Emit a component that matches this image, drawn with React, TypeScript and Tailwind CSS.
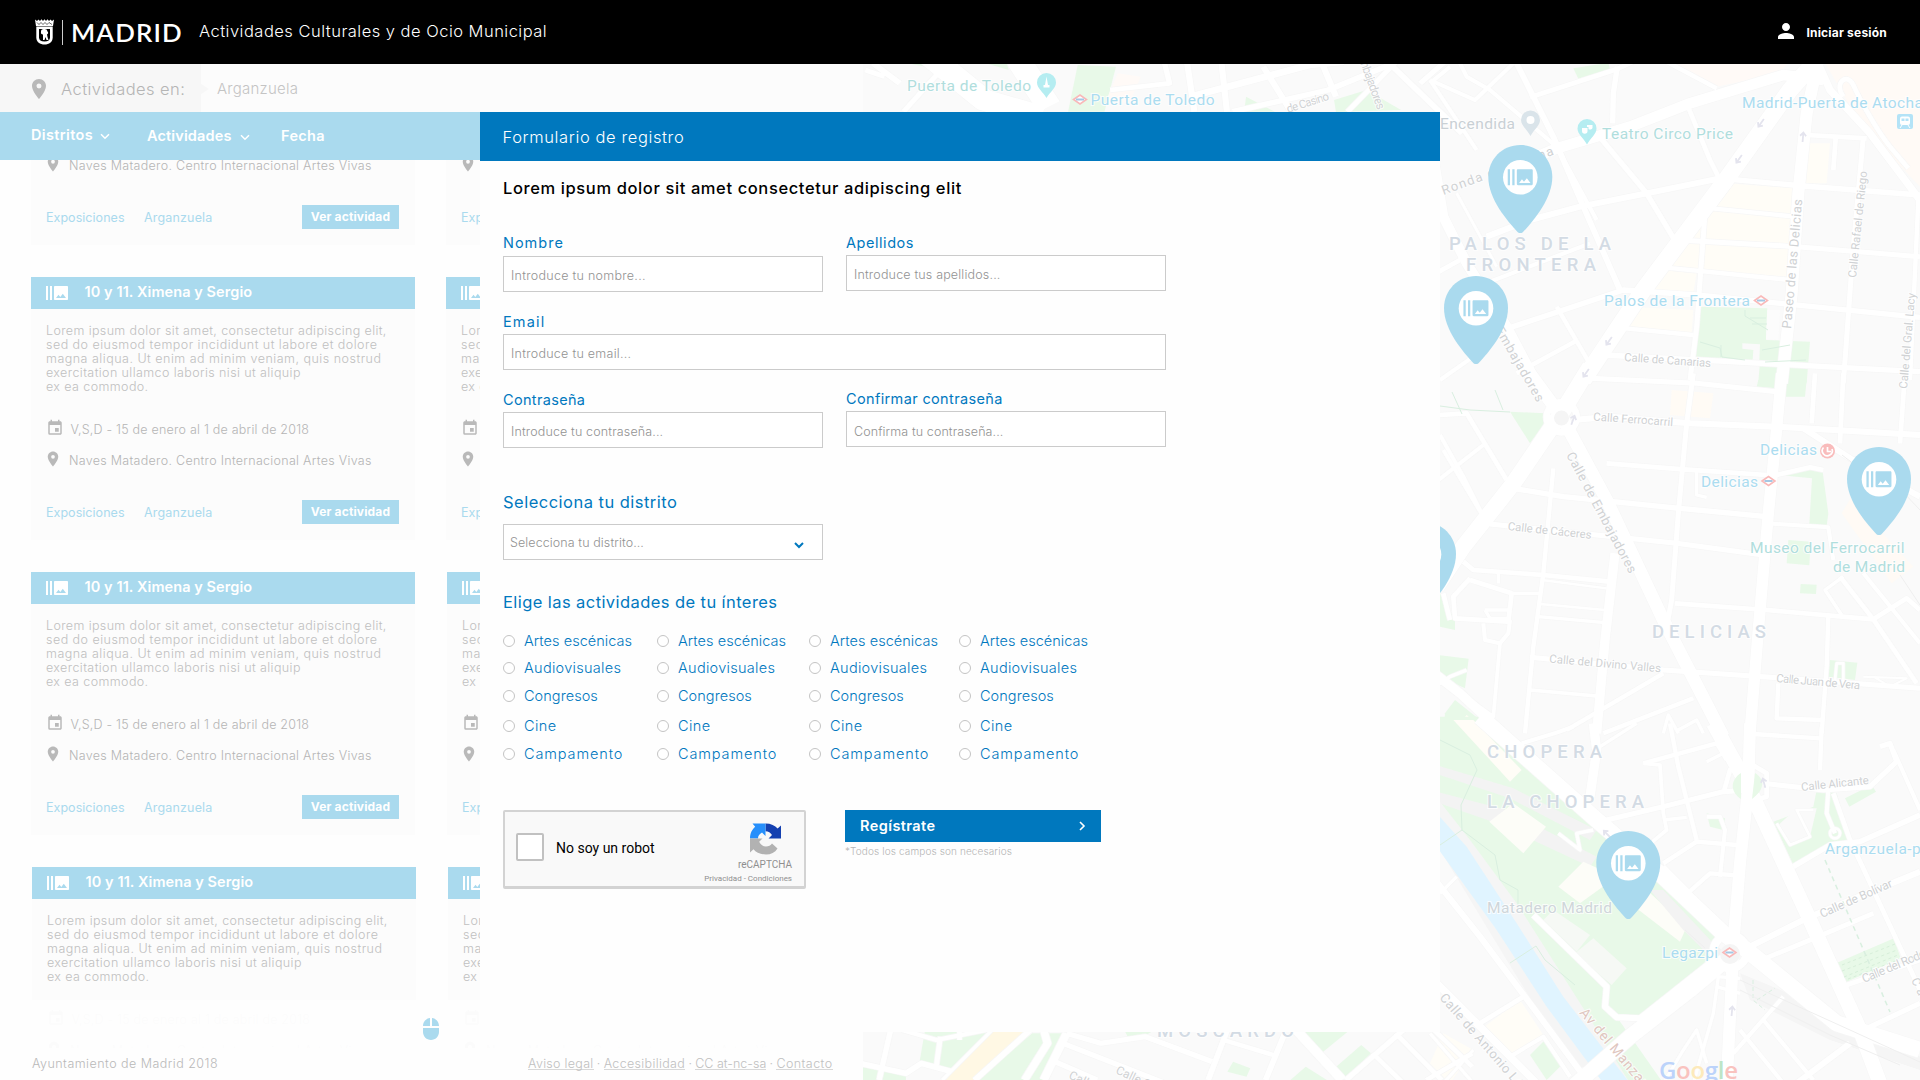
import React from "react";
import {
  MdBurstMode,
  MdEvent,
  MdLocationOn,
  MdMouse,
  MdPerson,
} from "react-icons/md";

/* ---------- Map ---------- */

type Road = [d: string, width: number];

const ROADS_NORTH: Road[] = [
  ["M1160 0L1080 90L880 370L640 690L480 930L460 960", 50],
  ["M1165 0L1130 160L1105 400L1085 700L1055 970", 36],
  ["M180 350L380 265L600 200L780 130L1060 45L1180 60", 32],
  ["M0 230L40 470L110 610L230 800L320 970", 30],
  ["M300 112L560 28L620 0", 14],
  ["M562 20L550 100L548 190", 16],
  ["M255 0L370 230L460 440L570 690", 17],
  ["M85 0L110 50L180 90L380 260L500 480", 12],
  ["M0 70L60 20", 12],
  ["M0 60L135 120L250 10", 12],
  ["M0 60L140 270", 12],
  ["M500 220L650 400L740 550", 16],
  ["M170 530L300 480L450 440L650 400L870 355", 18],
  ["M870 355L1120 378L1470 405", 16],
  ["M770 130L840 300L865 350", 14],
  ["M745 540L1100 560L1470 590", 15],
  ["M845 445L1095 470", 13],
  ["M825 460L800 800L780 960", 15],
  ["M700 622L1080 660", 13],
  ["M180 665L480 550", 12],
  ["M0 650L90 600", 14],
  ["M225 808L400 750L580 690L800 705L1000 725L1470 772", 16],
  ["M585 805L790 825", 13],
  ["M260 940L440 842", 13],
  ["M380 740L490 930", 13],
  ["M80 400L200 620", 9],
  ["M520 885L900 905L1470 935", 16],
  ["M1300 230L1270 560L1240 970", 15],
  ["M1130 225L1310 235", 14],
  ["M1217 235L1210 330", 14],
  ["M1160 0L1200 90L1320 220L1470 420", 22],
  ["M1465 420L1440 960", 13],
  ["M1240 110C1210 70 1250 35 1270 75C1290 120 1340 210 1380 260L1435 325", 14],
  ["M700 0L860 85", 13],
  ["M30 960L130 890", 12],
];

const ROADS_CENTER: Road[] = [
  ["M480 -40L400 90L250 310L100 500L20 620", 48],
  ["M350 112A45 45 0 1 0 440 112A45 45 0 1 0 350 112", 20],
  ["M270 -60L395 110L530 360L700 720L880 1070", 38],
  ["M1055 -20L1035 200L1015 400L985 750L960 1060", 34],
  ["M430 120L540 110L780 130L1040 140L1470 165", 18],
  ["M480 -5L800 10L1040 35", 15],
  ["M790 -20L770 130L745 400L725 660L710 740", 15],
  ["M530 250L760 268L1010 285", 14],
  ["M1040 285L1140 262L1180 270", 14],
  ["M800 275L800 345L830 352", 10],
  ["M250 325L400 350L750 385L1010 410", 16],
  ["M180 432L740 490L1000 525", 15],
  ["M1010 430L1195 442L1210 540", 12],
  ["M100 545L130 570L340 585L540 605", 14],
  ["M370 265L340 580L310 800L285 1060", 13],
  ["M555 520L525 780L500 1060", 28],
  ["M335 600L530 625", 7],
  ["M330 672L525 690", 7],
  ["M325 710L525 728", 10],
  ["M300 832L700 870L1000 890L1470 925", 15],
  ["M300 930L500 948", 11],
  ["M410 1050L700 880", 13],
  ["M520 1060L790 955", 13],
  ["M735 670L1010 690L1330 718L1430 655L1470 690", 14],
  ["M1230 590L1330 718L1460 910", 14],
  ["M1300 580L1470 790", 12],
  ["M1240 590L1185 630L1235 705", 10],
  ["M1195 710L1190 860L1175 1060", 13],
  ["M1045 910L1040 1015L1175 1020", 13],
  ["M1155 -20L1145 130", 14],
  ["M1240 -20L1230 190", 14],
  ["M1425 -20L1410 190", 14],
  ["M1120 145L1260 235L1470 350", 18],
  ["M40 210L160 410", 12],
  ["M0 320L160 195", 12],
  ["M30 105L110 100L230 300", 14],
  ["M30 165L100 290L160 410", 12],
  ["M120 595L70 650L75 715L235 725L245 640L120 600", 14],
  ["M165 690L235 690M165 690L180 715L235 715", 10],
  ["M160 730L165 780L210 790L235 760L240 720", 12],
  ["M205 570L205 610", 10],
  ["M210 790L190 1010L120 960", 11],
  ["M245 640L330 640", 10],
  ["M40 640L60 720", 14],
  ["M0 870L90 940L220 1060", 28],
  ["M0 930L60 890L110 870", 10],
  ["M700 1060L715 1005L745 1060M745 1050L800 1020L820 1060", 10],
  ["M1300 890L1430 895L1380 920L1330 890", 6],
  ["M1215 900L1220 850L1240 850L1240 900", 8],
];

const ROADS_SOUTH: Road[] = [
  ["M150 -40L500 270L700 440L880 610L950 660L1220 880L1470 960", 48],
  ["M850 -20L960 180L1140 570L1290 900L1350 1060", 44],
  ["M960 -20L955 170L930 400L910 640L905 760L890 1060", 36],
  ["M850 665A50 50 0 1 0 950 665A50 50 0 1 0 850 665", 24],
  ["M900 680L780 780L600 920L430 1070", 46],
  ["M310 555L530 770L525 830L560 862L630 865L850 690", 18],
  ["M0 430L150 620L300 820L470 1050", 18],
  ["M0 740L150 890L330 1070", 22],
  ["M955 180L880 185L700 230L530 270", 15],
  ["M1000 160L1180 180L1320 170L1400 95L1380 40L1350 50", 15],
  ["M1210 190L1260 330L1470 780", 14],
  ["M1195 180L1190 250L1215 310", 12],
  ["M1200 310A15 15 0 1 0 1230 310A15 15 0 1 0 1200 310", 8],
  ["M1090 410L1200 345L1290 335L1470 255", 16],
  ["M930 665L1140 560L1470 425", 18],
  ["M970 700L1140 630L1330 550", 14],
  ["M1250 765L1470 690", 14],
  ["M1300 900L1470 820", 15],
  ["M1390 60L1470 240", 12],
  ["M490 -20L500 60L480 200", 28],
  ["M275 40L380 8L430 -10", 12],
  ["M510 50L620 -20", 10],
  ["M720 -20L745 110L800 330", 13],
  ["M640 100L860 40", 13],
  ["M640 100L690 105L700 250L710 300L650 350", 11],
  ["M700 270L770 262", 10],
  ["M700 400L800 335L920 345", 13],
  ["M700 410L780 490", 14],
  ["M750 510L840 430L920 436", 13],
  ["M880 190L900 120L960 100L1010 130L1010 200L955 215", 14],
  ["M860 40L890 90", 12],
  ["M830 95L900 60", 10],
  ["M970 12L1170 25", 13],
  ["M1175 -10L1170 120", 13],
  ["M830 260L870 260L885 300L870 440", 12],
  ["M865 740L850 850L790 1060", 10],
  ["M860 770L930 790M860 740L930 745", 10],
  ["M930 900L1060 1060", 12],
  ["M1060 800L910 970", 12],
  ["M1000 870L1150 1050", 12],
  ["M1260 940L1100 1060", 18],
  ["M150 880L280 800", 14],
  ["M240 980L340 920L420 1040", 12],
  ["M30 490L80 440", 10],
  ["M0 910L130 1060", 10],
  ["M130 960L40 1060", 10],
  ["M700 1060L760 960L800 900L830 1000", 10],
  ["M385 310L450 360L440 310L490 300", 10],
  ["M1040 280L1080 345L1140 320L1100 240L1150 240", 8],
];

const ROADS_TOP: Road[] = [
  ["M60 190L130 250", 16],
  ["M200 160L350 300L500 350", 64],
  ["M440 180L520 320", 64],
  ["M880 180L900 335", 16],
  ["M820 180L835 250L680 270", 14],
  ["M970 180L985 335", 16],
  ["M890 290L1200 195L1290 185", 20],
  ["M1080 200L1150 330", 16],
  ["M1000 335L1250 270L1420 190", 16],
  ["M1300 335L1440 170", 14],
  ["M1400 180L1600 400", 16],
  ["M1490 250L1560 180", 14],
  ["M140 335L230 220", 14],
  ["M40 210L90 230", 14],
  ["M1230 180L1270 290", 16],
];

const ROADS_BOTTOM: Road[] = [
  ["M0 190L120 220L160 190L240 215", 16],
  ["M80 90L50 240", 14],
  ["M110 90L200 120L330 90", 13],
  ["M210 110L200 195", 13],
  ["M260 90L260 120", 12],
  ["M345 90L215 240", 10],
  ["M445 90L300 240", 16],
  ["M480 90L490 130L430 240", 20],
  ["M540 100L480 240", 22],
  ["M530 130L820 260", 15],
  ["M540 100L630 130L745 110L920 185", 15],
  ["M510 185L620 240", 15],
  ["M960 90L910 240", 15],
  ["M950 120L1080 165", 13],
  ["M1110 100L1060 240", 15],
  ["M1140 90L1260 240", 26],
  ["M1420 90L1270 240", 15],
  ["M1340 160L1420 250", 13],
  ["M1500 90L1600 200", 13],
  ["M1400 100L1520 240", 13],
  ["M1600 160L1480 240", 13],
];

const AREAS: { at: string; fill: string; d: string }[] = [
  // north
  { at: "n", fill: "#e8f9e8", d: "M430 25L445 56L540 28L535 8Z" },
  { at: "n", fill: "#e8f9e8", d: "M775 528L815 488L812 532Z" },
  { at: "n", fill: "#fffdf7", d: "M890 370L1100 385L1080 650L700 620L830 450Z" },
  { at: "n", fill: "#fffdf7", d: "M690 630L800 640L790 700L640 690Z" },
  { at: "n", fill: "#fffdf7", d: "M590 740L790 750L785 820L540 810Z" },
  { at: "n", fill: "#fffdf7", d: "M1110 250L1200 250L1190 370L1100 370Z" },
  { at: "n", fill: "#fffaf7", d: "M700 0L1080 0L1050 40L860 80Z" },
  { at: "n", fill: "#fffaf6", d: "M1180 0L1470 0L1470 380L1290 190Z" },
  { at: "n", fill: "#e8f9e8", d: "M812 740L1012 745L1008 840L1140 845L1130 970L985 965L990 905L798 890Z" },
  { at: "n", fill: "#fafafa", d: "M937 850L990 853L988 900L968 900L970 870L937 866Z" },
  { at: "n", fill: "#fcfcfc", d: "M1012 750L1050 750L1045 840L1008 838Z" },
  // center
  { at: "c", fill: "#e8f9e8", d: "M240 95L345 100L345 130L300 190Z" },
  { at: "c", fill: "#e8f9e8", d: "M985 0L1130 0L1125 50L1060 50L1040 25L980 20Z" },
  { at: "c", fill: "#fffbf5", d: "M725 30L850 40L840 115L720 105Z" },
  { at: "c", fill: "#e8f9e8", d: "M1045 275L1140 262L1178 275L1195 400L1190 438L1138 432L1146 295L1045 285Z" },
  { at: "c", fill: "#e8f9e8", d: "M1075 480L1142 485L1138 556L1070 550Z" },
  { at: "c", fill: "#e8f9e8", d: "M1112 612L1160 614L1158 642L1110 640Z" },
  { at: "c", fill: "#fffaf5", d: "M1262 355L1235 400L1385 610L1450 560Z" },
  { at: "c", fill: "#e8f9e8", d: "M30 640L75 720L75 750L30 740Z" },
  { at: "c", fill: "#e8f9e8", d: "M30 826L116 836L105 925L30 890Z" },
  { at: "c", fill: "#e8f9e8", d: "M75 960L200 1060L40 1060L45 1000Z" },
  { at: "c", fill: "#fffdf5", d: "M110 1005L170 1060L60 1060Z" },
  { at: "c", fill: "#e8f9e8", d: "M1200 840L1282 848L1275 900L1195 890Z" },
  // south
  { at: "s", fill: "#e8f9e8", d: "M0 -40L160 -40L500 270L860 620L850 700L630 860L560 860L700 1060L560 1060L0 240Z" },
  { at: "s", fill: "#fffdf7", d: "M70 -30L130 -30L275 120L240 155Z" },
  { at: "s", fill: "#f3f3f3", d: "M0 100L250 175L500 300L480 330L240 205L0 125Z" },
  { at: "s", fill: "#f3f3f3", d: "M0 180L230 240L500 380L480 410L200 280L0 210Z" },
  { at: "s", fill: "#fdfdf8", d: "M250 220L348 290L280 370L178 275Z" },
  { at: "s", fill: "#fdfdf8", d: "M460 395L560 440L450 520L385 470Z" },
  { at: "s", fill: "#fdfdf8", d: "M640 470L770 590L750 635L600 520Z" },
  { at: "s", fill: "#f6f9f5", d: "M370 540L480 615L440 665L340 570Z" },
  { at: "s", fill: "#f6f9f5", d: "M490 625L590 715L545 765L435 670Z" },
  { at: "s", fill: "#f3f3f3", d: "M660 480L700 480L850 640L900 680L880 700L830 670L760 600Z" },
  { at: "s", fill: "#f5f5f5", d: "M30 215L120 330L260 520L400 740L520 930L600 1060L420 1000L230 690L30 360Z" },
  { at: "s", fill: "#e0f4ff", d: "M20 250L110 350L260 580L400 800L600 1060L520 1060L350 830L200 600L20 350Z" },
  { at: "s", fill: "#fffdf7", d: "M150 900L270 810L340 915L240 975Z" },
  { at: "s", fill: "#fffdf7", d: "M40 910L130 960L60 1060L0 1000Z" },
  { at: "s", fill: "#e8f9e8", d: "M345 930L400 1000L350 1050L300 975Z" },
  { at: "s", fill: "#e8f9e8", d: "M830 250L885 265L880 300L840 290Z" },
  { at: "s", fill: "#e8f9e8", d: "M1030 275L1150 230L1160 180L1220 190L1260 330L1090 405Z" },
  { at: "s", fill: "#fafafa", d: "M1045 285L1100 235L1160 235L1140 320L1080 350Z" },
  { at: "s", fill: "#e8f9e8", d: "M1245 205L1325 165L1338 185L1258 230Z" },
  { at: "s", fill: "#e8f9e8", d: "M1218 700L1392 625L1412 685L1240 760Z" },
  { at: "s", fill: "#f5f5f5", d: "M930 730L1100 800L1300 900L1470 980L1470 1020L1200 930L960 810Z" },
  // strip above the dialog
  { at: "t", fill: "#e8f9e8", d: "M150 190L270 190L280 210L220 205Z" },
  { at: "t", fill: "#e8f9e8", d: "M355 190L410 190L415 210Z" },
  { at: "t", fill: "#e8f9e8", d: "M595 195L695 200L665 335L570 335Z" },
  { at: "t", fill: "#e8f9e8", d: "M1035 290L1110 335L1030 335Z" },
  { at: "t", fill: "#e8f9e8", d: "M1265 300L1350 270L1440 330L1270 336Z" },
  { at: "t", fill: "#fffaf7", d: "M700 220L760 230L730 310L670 300Z" },
  // strip below the dialog
  { at: "b", fill: "#e8f9e8", d: "M170 90L340 90L230 215L155 190Z" },
  { at: "b", fill: "#e8f9e8", d: "M0 200L120 225L120 240L0 240Z" },
  { at: "b", fill: "#fff8e4", d: "M350 90L435 90L295 240L222 240Z" },
  { at: "b", fill: "#e8f9e8", d: "M450 100L540 100L480 240L300 240Z" },
  { at: "b", fill: "#e8f9e8", d: "M690 90L770 90L740 110L700 110Z" },
  { at: "b", fill: "#e8f9e8", d: "M1160 90L1280 90L1200 165Z" },
  { at: "b", fill: "#e8f9e8", d: "M1310 135L1335 160L1270 235L1240 205Z" },
  { at: "b", fill: "#e8f9e8", d: "M1165 200L1220 240L1125 240Z" },
  { at: "b", fill: "#e8f9e8", d: "M975 185L1020 205L1010 230L960 215Z" },
];

const TILES: { id: string; transform: string; roads: Road[] }[] = [
  { id: "t", transform: "translate(850 0) scale(.38265 .33333)", roads: ROADS_TOP },
  { id: "b", transform: "translate(860 1000) scale(.38265 .33333)", roads: ROADS_BOTTOM },
  { id: "n", transform: "translate(1430 60) scale(.33333)", roads: ROADS_NORTH },
  { id: "c", transform: "translate(1430 380) scale(.33333)", roads: ROADS_CENTER },
  { id: "s", transform: "translate(1430 730) scale(.33333)", roads: ROADS_SOUTH },
];

interface LabelProps {
  x: number;
  y: number;
  w: number;
  size: number;
  fill?: string;
  rotate?: number;
  weight?: number;
  children: string;
}

function Label({ x, y, w, size, fill = "#d0d2d4", rotate = 0, weight = 400, children }: LabelProps) {
  return (
    <text
      transform={`translate(${x} ${y}) rotate(${rotate})`}
      fontSize={size}
      fontWeight={weight}
      fill={fill}
      stroke="#fff"
      strokeOpacity={0.8}
      strokeWidth={2}
      paintOrder="stroke"
      textLength={w}
    >
      {children}
    </text>
  );
}

function Metro({ x, y }: { x: number; y: number }) {
  return (
    <g transform={`translate(${x} ${y})`}>
      <path d="M-6.5 0L0-4.5L6.5 0L0 4.5Z" fill="#fff" stroke="#f9b9b9" strokeWidth="1.6" />
      <rect x="-4" y="-1" width="8" height="2" fill="#a5c8e4" />
    </g>
  );
}

function Pin({ x, y }: { x: number; y: number }) {
  return (
    <g transform={`translate(${x} ${y})`}>
      <path
        d="M32 0C14 0 0 14.3 0 32C0 54 19 76 29.5 87.2Q32 89 34.5 87.2C45 76 64 54 64 32C64 14.3 50 0 32 0Z"
        fill="#aadaee"
      />
      <circle cx="32" cy="32.3" r="17.3" fill="#fff" />
      <MdBurstMode x={18.3} y={18.6} width={27.3} height={27.3} size={27.3} color="#aadaee" />
    </g>
  );
}

function Arrow({ x, y, r }: { x: number; y: number; r: number }) {
  return (
    <path
      d="M0 5V-4M-3 -1L0 -4.5L3 -1"
      transform={`translate(${x} ${y}) rotate(${r})`}
      fill="none"
      stroke="#e4e4ee"
      strokeWidth="1.8"
    />
  );
}

function CityMap() {
  const teal = "#b0dedd";
  const sky = "#abdcf0";
  const area = "#d3dbe4";
  return (
    <svg className="absolute inset-0 h-[1080px] w-[1920px]" viewBox="0 0 1920 1080" fontFamily="Roboto, sans-serif">
      <rect width="1920" height="1080" fill="#fafafa" />
      {TILES.map((t) => (
        <g key={t.id} transform={t.transform}>
          {AREAS.filter((a) => a.at === t.id).map((a) => (
            <path key={a.d} d={a.d} fill={a.fill} />
          ))}
        </g>
      ))}
      {["#f7f7f7", "#ffffff"].map((stroke, pass) =>
        TILES.map((t) => (
          <g key={t.id + stroke} transform={t.transform} fill="none" stroke={stroke} strokeLinejoin="round">
            {t.roads.map(([d, w]) => (
              <path key={d} d={d} strokeWidth={pass === 0 ? w + 4 : w} />
            ))}
          </g>
        ))
      )}
      <circle cx="1561.5" cy="418" r="7.5" fill="#f5f5f5" />
      <path d="M1741 773C1730 780 1730 792 1741 799Z" fill="#e8f9e8" />
      <path d="M1755 773C1766 780 1764 790 1752 799Z" fill="#e8f9e8" />
      <circle cx="1730" cy="954" r="10" fill="#f5f5f5" />
      <g fill="none" stroke="#d9efe0" strokeWidth="1">
        <path d="M1745 310V316L1768 330M1750 318H1766M1752 324H1767M1700 342L1720 348L1722 357L1745 360M1721 345V357M1762 350L1790 345M1765 362L1806 360" />
        <path d="M1440 406L1470 410L1510 412M1452 392L1462 414M1495 390L1503 410" />
        <path d="M1440 740L1470 755L1477 770L1461 805L1462 830L1495 855L1500 880L1518 890V905" />
        <path d="M1440 845L1462 830M1510 963L1536 946M1536 946L1545 960L1575 985" />
        <path d="M1825 860L1890 1012" strokeWidth="1.5" strokeDasharray="5 4" />
        <path d="M1753 980V1000L1765 1010M1757 1000L1775 988" strokeDasharray="4 3" />
      </g>
      <g fill="none" stroke="#d7efda" strokeWidth="1" strokeDasharray="3 3">
        <path d="M1842 965L1895 944M1842 971L1897 950M1844 977L1898 955M1848 979L1898 960" />
      </g>
      <g fill="none" stroke="#efefef" strokeWidth="1">
        <path d="M1868 455L1920 510M1842 455L1868 475M1900 575L1920 605M1685 930L1705 948M1740 980L1850 1030L1920 1062M1740 990L1830 1035L1900 1065" />
      </g>

      <Arrow x={1761} y={123} r={215} />
      <Arrow x={1739} y={159} r={215} />
      <Arrow x={1803} y={137} r={5} />
      <Arrow x={1609} y={341} r={215} />
      <Arrow x={1586} y={373} r={215} />
      <Arrow x={1573} y={420} r={20} />
      <Arrow x={1764} y={783} r={-15} />
      <Arrow x={1607} y={834} r={-45} />
      <Arrow x={1732} y={1011} r={5} />

      <Label x={907} y={91} w={124} size={15.5} fill={teal}>Puerta de Toledo</Label>
      <Label x={1090.5} y={105} w={124} size={15.5} fill={sky}>Puerta de Toledo</Label>
      <Label x={1742} y={107.5} w={181} size={15.5} fill={sky}>Madrid-Puerta de Atocha</Label>
      <Label x={1440} y={128.5} w={75} size={15.5} fill="#c9d0d5">Encendida</Label>
      <Label x={1602} y={138.5} w={131} size={15.5} fill={teal}>Teatro Circo Price</Label>
      <Label x={1604} y={306} w={146} size={15.5} fill={sky}>Palos de la Frontera</Label>
      <Label x={1760} y={455} w={57} size={15.5} fill={sky}>Delicias</Label>
      <Label x={1701} y={486.5} w={57} size={15.5} fill={sky}>Delicias</Label>
      <Label x={1750} y={553} w={154.5} size={15.5} fill={teal}>Museo del Ferrocarril</Label>
      <Label x={1833} y={572} w={72} size={15.5} fill={teal}>de Madrid</Label>
      <Label x={1487} y={912.5} w={125} size={15.5} fill="#cfd6da">Matadero Madrid</Label>
      <Label x={1662} y={958} w={56} size={15.5} fill={sky}>Legazpi</Label>
      <Label x={1825} y={854} w={100} size={15.5} fill={sky}>Arganzuela-pl</Label>

      <Label x={1449} y={250} w={162} size={18.5} fill={area} weight={500}>PALOS DE LA</Label>
      <Label x={1466} y={271} w={130} size={18.5} fill={area} weight={500}>FRONTERA</Label>
      <Label x={1652} y={638} w={114} size={18.5} fill={area} weight={500}>DELICIAS</Label>
      <Label x={1487} y={757.5} w={115} size={18.5} fill={area} weight={500}>CHOPERA</Label>
      <Label x={1487} y={807.5} w={157} size={18.5} fill={area} weight={500}>LA CHOPERA</Label>
      <Label x={1157} y={1036.5} w={137} size={18.5} fill={area} weight={500}>MOSCARDÓ</Label>

      <Label x={1443.5} y={195} w={118} size={13} rotate={-20}>Ronda de Atocha</Label>
      <Label x={1495} y={330} w={84} size={13} rotate={60}>Embajadores</Label>
      <Label x={1566} y={455} w={135} size={13} rotate={62}>Calle de Embajadores</Label>
      <Label x={1791} y={329} w={130} size={13} rotate={-85}>Paseo de las Delicias</Label>
      <Label x={1856} y={278} w={107} size={11.5} rotate={-84}>Calle Rafael de Riego</Label>
      <Label x={1907} y={389} w={96} size={11.5} rotate={-85}>Calle del Gral. Lacy</Label>
      <Label x={1624} y={361} w={87} size={11.5} rotate={4}>Calle de Canarias</Label>
      <Label x={1593} y={420.5} w={80} size={11.5} rotate={4}>Calle Ferrocarril</Label>
      <Label x={1507.5} y={530} w={84} size={11.5} rotate={6}>Calle de Cáceres</Label>
      <Label x={1549} y={662.5} w={112} size={11.5} rotate={5}>Calle del Divino Valles</Label>
      <Label x={1776} y={682} w={84} size={11.5} rotate={5}>Calle Juan de Vera</Label>
      <Label x={1801.5} y={791} w={68} size={11.5} rotate={-6}>Calle Alicante</Label>
      <Label x={1822} y={918} w={78} size={12} rotate={-24}>Calle de Bolívar</Label>
      <Label x={1864} y={983} w={74} size={12} rotate={-23}>Calle del Rodeo</Label>
      <Label x={1911} y={980} w={60} size={12} rotate={65}>Camino</Label>
      <Label x={1439} y={998} w={142} size={13} rotate={49}>Calle de Antonio López</Label>
      <Label x={1579} y={1013} w={130} size={14} rotate={50} fill="#e0c6bf">Av del Manzanares</Label>
      <Label x={1068} y={1078} w={75} size={12} rotate={25}>Calle de Elvira</Label>
      <Label x={1115} y={1073} w={90} size={12} rotate={25}>Calle Gral. Marvá</Label>
      <Label x={1357} y={54} w={60} size={12} rotate={70}>Embajadores</Label>
      <Label x={1288} y={113} w={44} size={11.5} rotate={-18}>de Casino</Label>

      <Metro x={1080} y={99.5} />
      <Metro x={1761} y={300.5} />
      <Metro x={1768.5} y={481} />
      <Metro x={1729.5} y={952.5} />
      <circle cx="1827.5" cy="451" r="7.5" fill="#f9bcbc" />
      <path d="M1823.5 447.500A5 5 0 1 0 1832 449M1827.500 447V451.500H1831" fill="none" stroke="#fff" strokeWidth="1.7" />

      <g transform="translate(1037 73)">
        <path d="M9.500 0A9.500 9.500 0 0 1 19 9.500C19 15 13 19 9.500 25C6 19 0 15 0 9.500A9.500 9.500 0 0 1 9.500 0Z" fill="#b5edf1" />
        <path d="M9.500 3.500L11 12H12.500V14.500H6.500V12H8Z" fill="#fff" />
      </g>
      <g transform="translate(1577.500 119)">
        <path d="M9.500 0A9.500 9.500 0 0 1 19 9.500C19 15 13 19 9.500 25.500C6 19 0 15 0 9.500A9.500 9.500 0 0 1 9.500 0Z" fill="#b5edf1" />
        <path d="M4.500 9H10V12A2.700 2.700 0 0 1 4.500 12ZM9.500 6H15V9A2.700 2.700 0 0 1 11 10V8H9.500Z" fill="#fff" />
      </g>
      <g transform="translate(1521 110.500)">
        <path d="M9.500 0A9.500 9.500 0 0 1 19 9.500C19 15 13 19 9.500 25.500C6 19 0 15 0 9.500A9.500 9.500 0 0 1 9.500 0Z" fill="#dae4ea" />
        <circle cx="9.500" cy="9.500" r="4" fill="#fff" />
      </g>
      <rect x="1897" y="114" width="16" height="15" rx="2" fill="#b4e3f7" />
      <rect x="1900" y="116.500" width="10" height="8.500" rx="2" fill="#fff" />
      <path d="M1901.500 118.500H1904.500V121H1901.500ZM1905.500 118.500H1908.500V121H1905.500Z" fill="#b4e3f7" />
      <path d="M1902 125L1900 128M1908 125L1910 128" stroke="#fff" />

      <text x="1659" y="1079" fontFamily="Open Sans, sans-serif" fontSize="24" fontWeight="600" textLength="79">
        <tspan fill="#bcd3fa">G</tspan>
        <tspan fill="#f9c3bf">o</tspan>
        <tspan fill="#fdeabb">o</tspan>
        <tspan fill="#bcd3fa">g</tspan>
        <tspan fill="#bde5c7">l</tspan>
        <tspan fill="#f9c3bf">e</tspan>
      </text>

      <Pin x={1488.300} y={145} />
      <Pin x={1444} y={276} />
      <Pin x={1392} y={522} />
      <Pin x={1847} y={447} />
      <Pin x={1596.300} y={831} />
    </svg>
  );
}

/* ---------- Top bars ---------- */

function Shield() {
  return (
    <svg width="19" height="26" viewBox="0 0 19 26" className="shrink-0">
      <path
        d="M0 .5L2 2L3.500 .5L5 2L6.500 .3L8 2L9.500 .2L11 2L12.500 .3L14 2L15.500 .5L17 2L19 .5L18 7H1Z"
        fill="#fff"
      />
      <path d="M2 3.500L4 5.500L6 3.500L8 5.500L10 3.500L12 5.500L14 3.500L17 5.500" stroke="#000" strokeWidth=".6" fill="none" />
      <path d="M1.300 7.600H17.700V18.500C17.700 23 14 25.500 9.500 25.500C5 25.500 1.300 23 1.300 18.500Z" fill="#fff" />
      <path d="M4 10H15V18.500C15 21 13 22.500 9.500 22.500C6 22.500 4 21 4 18.500Z" fill="#000" />
      <path d="M6 13A3 2.500 0 0 1 12.500 12.500A2 2 0 0 1 12 15.500L12.500 18L13.500 21H11.500L10.500 18L9.500 21H8V15.500C6.500 15.500 5.500 14.500 6 13Z" fill="#fff" />
    </svg>
  );
}

function Header() {
  return (
    <header className="relative flex h-16 w-full bg-black text-white">
      <div className="ml-[35px] flex h-16 items-center">
        <Shield />
        <span className="ml-[8px] h-[25px] w-px bg-white/80" />
        <span className="ml-[8px] font-['Lato'] text-[25.800px] leading-[32px] font-semibold tracking-[1.150px]">MADRID</span>
      </div>
      <h1 className="absolute top-[21px] left-[199px] text-[16.500px] leading-5 font-light tracking-[0.480px] whitespace-nowrap">
        Actividades Culturales y de Ocio Municipal
      </h1>
      <div className="mr-[33px] ml-auto flex items-start">
        <MdPerson size={24} className="mt-[19px]" />
        <span className="mt-[23px] ml-[8px] text-[12px] leading-5 font-bold tracking-[0.200px]">Iniciar sesión</span>
      </div>
    </header>
  );
}

function Chevron({ className }: { className?: string }) {
  return (
    <svg width="10" height="7" viewBox="0 0 10 7" className={className}>
      <path d="M1 1.200L5 5.300L9 1.200" fill="none" stroke="currentColor" strokeWidth="1.500" />
    </svg>
  );
}

function LocationBar() {
  return (
    <div className="flex h-12 w-[863px] bg-[#fcfcfc] text-[#b5b5b5]">
      <div className="flex h-12 w-[201px] bg-[#f7f7f7]">
        <MdLocationOn size={24} className="mt-[13px] ml-[27px] text-[#b9b9b9]" />
        <span className="mt-[15px] ml-[10px] text-[16.500px] leading-5 font-light tracking-[0.450px] whitespace-nowrap">
          Actividades en:
        </span>
      </div>
      <svg width="8" height="10" viewBox="0 0 8 10" className="mt-[20px]">
        <path d="M0 0L8 5L0 10Z" fill="#f7f7f7" />
      </svg>
      <span className="mt-[15px] ml-[8px] text-[15px] leading-5 font-light tracking-[0.250px] text-[#c4c4c4]">Arganzuela</span>
    </div>
  );
}

function NavBar() {
  return (
    <nav className="flex h-12 w-[863px] bg-[#aadaee] text-[14.500px] leading-5 font-semibold text-white">
      <span className="mt-[13px] ml-[31px] tracking-[0.350px]">Distritos</span>
      <Chevron className="mt-[21px] ml-[7px]" />
      <span className="mt-[14px] ml-[37px] tracking-[0.150px]">Actividades</span>
      <Chevron className="mt-[22px] ml-[8px]" />
      <span className="mt-[14px] ml-[31.500px] tracking-[0.300px]">Fecha</span>
    </nav>
  );
}

/* ---------- Activity cards ---------- */

function ActivityCard() {
  return (
    <article className="h-[263px] w-[384px] shrink-0 bg-[#fcfcfc] text-[#b9b9b9]">
      <header className="flex h-8 items-start bg-[#aadaee] text-white">
        <MdBurstMode size={24} className="mt-[4px] ml-[14px]" />
        <h2 className="mt-[5px] ml-[15.500px] text-[14.500px] leading-5 font-semibold tracking-[0.080px] whitespace-nowrap">
          10 y 11. Ximena y Sergio
        </h2>
      </header>
      <p className="mt-[15px] ml-[15px] text-[12.500px] leading-[14px] font-light tracking-[0.400px] whitespace-nowrap text-[#c0c0c0]">
        <span className="tracking-[0.370px]">Lorem ipsum dolor sit amet, consectetur adipiscing elit,</span>
        <br />
        <span className="tracking-[0.470px]">sed do eiusmod tempor incididunt ut labore et dolore</span>
        <br />
        <span className="tracking-[0.490px]">magna aliqua. Ut enim ad minim veniam, quis nostrud</span>
        <br />
        exercitation ullamco laboris nisi ut aliquip
        <br />
        ex ea commodo.
      </p>
      <div className="mt-[26px] ml-[14.500px] flex h-[20px] text-[12.500px] leading-5 whitespace-nowrap">
        <MdEvent size={18} className="-mt-px" />
        <span className="ml-[7px] font-light tracking-[0.220px] text-[#b5b5b5]">V,S,D - 15 de enero al 1 de abril de 2018</span>
      </div>
      <div className="mt-[11px] ml-[13px] flex h-[20px] text-[12.500px] leading-5 whitespace-nowrap">
        <MdLocationOn size={18} className="-mt-px" />
        <span className="ml-[7px] font-light tracking-[0.290px] text-[#b5b5b5]">Naves Matadero. Centro Internacional Artes Vivas</span>
      </div>
      <div className="mt-[29px] mr-[16px] ml-[15px] flex text-[12.500px] leading-5 text-[#aadaee]">
        <span className="mt-[3px] tracking-[0.040px]">Exposiciones</span>
        <span className="mt-[3px] ml-[19.500px] tracking-[0.160px]">Arganzuela</span>
        <span className="ml-auto flex h-[24px] w-[97px] items-center justify-center bg-[#aadaee] pb-px text-[12px] font-bold tracking-[0.150px] text-white">
          Ver actividad
        </span>
      </div>
    </article>
  );
}

function ActivityList() {
  return (
    <section className="relative h-[888px] w-[863px] overflow-hidden bg-[#fefefe]">
      <div className="-mt-[178px] flex flex-col gap-8">
        {[0, 1, 2, 3].map((row) => (
          <div key={row} className={`flex ${row === 3 ? "ml-8 gap-8" : row === 2 ? "ml-[31px] gap-8" : "ml-[31px] gap-[31px]"}`}>
            <ActivityCard />
            <ActivityCard />
          </div>
        ))}
      </div>
      <div className="absolute bottom-0 left-0 h-[48px] w-full bg-[#fefefe]/96" />
      <MdMouse size={24} className="absolute bottom-[7px] left-[419px] text-[#aadaee]" />
    </section>
  );
}

function Footer() {
  return (
    <footer className="flex h-8 w-[863px] bg-[#fefefe] text-[12.500px] leading-5 font-light whitespace-nowrap text-[#b9b9b9]">
      <span className="mt-[6px] ml-[32px] tracking-[0.470px]">Ayuntamiento de Madrid 2018</span>
      <div className="mt-[6px] ml-[310px] flex h-[16px] leading-[19px] text-[#c0c0c0]">
        <span className="border-b border-[#d8d8d8] tracking-[0.290px]">Aviso legal</span>
        <span className="mx-[3.300px]">·</span>
        <span className="border-b border-[#d8d8d8] tracking-[0.330px]">Accesibilidad</span>
        <span className="mx-[3.300px]">·</span>
        <span className="border-b border-[#d8d8d8] tracking-[0px]">CC at-nc-sa</span>
        <span className="mx-[3.300px]">·</span>
        <span className="border-b border-[#d8d8d8] tracking-[0.450px]">Contacto</span>
      </div>
    </footer>
  );
}

/* ---------- Registration form ---------- */

interface FieldProps {
  label: string;
  placeholder: string;
  labelClass: string;
  placeholderClass: string;
  boxClass: string;
  className?: string;
}

function Field({ label, placeholder, labelClass, placeholderClass, boxClass, className = "" }: FieldProps) {
  return (
    <div className={className}>
      <div className={`text-[14.500px] leading-5 font-normal text-[#0078be] ${labelClass}`}>{label}</div>
      <div className={`flex h-[36px] items-start border border-[#cbcbcb] bg-white pl-[7px] ${boxClass}`}>
        <span className={`text-[12.500px] leading-5 font-light text-[#929292] ${placeholderClass}`}>{placeholder}</span>
      </div>
    </div>
  );
}

const ACTIVITIES = [
  { name: "Artes escénicas", row: "mt-[17px]", tracking: "tracking-[0.050px]" },
  { name: "Audiovisuales", row: "mt-[7px]", tracking: "tracking-[0.290px]" },
  { name: "Congresos", row: "mt-[8px]", tracking: "tracking-[0.060px]" },
  { name: "Cine", row: "mt-[10px]", tracking: "tracking-[0.400px]" },
  { name: "Campamento", row: "mt-[8px]", tracking: "tracking-[0.880px]" },
];

function ActivityOptions() {
  return (
    <div>
      {ACTIVITIES.map((a) => (
        <div key={a.name} className={`grid grid-cols-[154px_152px_150px_150px] ${a.row}`}>
          {[0, 1, 2, 3].map((c) => (
            <label key={c} className="flex h-5 items-center gap-[9px]">
              <span className="size-[12px] rounded-full border border-[#c4c4c4] bg-white" />
              <span className={`text-[14.500px] leading-5 font-light text-[#0078be] ${a.tracking}`}>{a.name}</span>
            </label>
          ))}
        </div>
      ))}
    </div>
  );
}

function CaptchaLogo() {
  return (
    <svg width="31" height="32" viewBox="0 0 31 32">
      <path d="M15.500 .500C21 .500 25 2.600 27.600 5.600L31 2.500V15.500H18.500L22 12C20.500 9.500 18.500 8.200 15.500 8.200Z" fill="#1440b0" />
      <path d="M0 15.500C0 10 2.200 6.300 5.200 3.700L2.500 .500H15.500V13L12 9.500C9.500 11 8 12.500 8 15.500Z" fill="#268ffb" />
      <path d="M0 15.500H12.500L9.200 18.800C10.500 21.800 13 23.500 16 23.500C18.500 23.500 20.800 22.500 22 20.500L27.500 25.500C25 29.500 21 31.500 16 31.500C10.500 31.500 6 29.500 3.500 26.200L0 29.500Z" fill="#b2b2b2" />
    </svg>
  );
}

function Captcha() {
  return (
    <div className="flex h-[79px] w-[303px] rounded-[2px] border-2 border-b-[3px] border-[#d3d3d3] bg-[#f9f9f9] font-['Roboto']">
      <span className="mt-[21px] ml-[11px] size-[28px] rounded-[2px] border-2 border-[#c1c1c1] bg-white" />
      <span className="mt-[26px] ml-[12px] text-[14px] leading-5 text-black">No soy un robot</span>
      <div className="mt-[11px] mr-[12px] ml-auto flex flex-col items-end whitespace-nowrap text-[#8f8f8f]">
        <div className="mr-[11px] h-8">
          <CaptchaLogo />
        </div>
        <span className="mt-[3.500px] text-[10px] leading-[12px] tracking-[0px]">reCAPTCHA</span>
        <span className="mt-[3px] text-[8px] leading-[10px] tracking-[0px]">Privacidad - Condiciones</span>
      </div>
    </div>
  );
}

function RegisterDialog() {
  return (
    <section className="absolute top-[112px] left-[480px] h-[920px] w-[960px] bg-[#fefefe]">
      <header className="h-[49px] bg-[#0078be] pt-[15px] pl-[22.500px] text-[16.500px] leading-5 font-light tracking-[0.610px] text-white">
        Formulario de registro
      </header>
      <div className="pl-[23px]">
        <h2 className="mt-[17px] text-[16.500px] leading-5 font-medium tracking-[0.610px] text-black">
          Lorem ipsum dolor sit amet consectetur adipiscing elit
        </h2>
        <div className="mt-[35px] w-[663px]">
          <div className="flex items-start justify-between">
            <Field className="w-[320px]" label="Nombre" placeholder="Introduce tu nombre..." labelClass="tracking-[1px]" placeholderClass="tracking-[0.280px]" boxClass="mt-[3px] pt-[9px]" />
            <Field className="w-[320px]" label="Apellidos" placeholder="Introduce tus apellidos..." labelClass="tracking-[0.550px]" placeholderClass="tracking-[0.170px]" boxClass="mt-[2px] pt-[9px]" />
          </div>
          <Field className="mt-[20px]" label="Email" placeholder="Introduce tu email..." labelClass="tracking-[1.150px]" placeholderClass="tracking-[0.270px]" boxClass="mt-[2px] pt-[9px]" />
          <div className="mt-[19px] flex items-start justify-between">
            <Field className="mt-px w-[320px]" label="Contraseña" placeholder="Introduce tu contraseña..." labelClass="tracking-[0.330px]" placeholderClass="tracking-[0.140px]" boxClass="mt-[2px] pt-[9px]" />
            <Field className="w-[320px]" label="Confirmar contraseña" placeholder="Confirma tu contraseña..." labelClass="tracking-[0.360px]" placeholderClass="tracking-[0.100px]" boxClass="mt-[2px] pt-[10px]" />
          </div>
        </div>
        <h3 className="mt-[42px] text-[16.500px] leading-6 tracking-[0.480px] text-[#0078be]">Selecciona tu distrito</h3>
        <div className="mt-[10px] flex h-[36px] w-[320px] items-start border border-[#cbcbcb] bg-white pl-[6px] text-[12.500px] leading-5 font-light tracking-[0.090px] text-[#929292]">
          <span className="mt-[8px]">Selecciona tu distrito...</span>
          <svg width="10" height="8" viewBox="0 0 10 8" className="mt-[17px] mr-[18px] ml-auto">
            <path d="M1 1L5 5L9 1" fill="none" stroke="#0078be" strokeWidth="2" />
          </svg>
        </div>
        <h3 className="mt-[30px] text-[16.500px] leading-6 tracking-[0.420px] text-[#0078be]">Elige las actividades de tu ínteres</h3>
        <ActivityOptions />
        <div className="mt-[46px] flex items-start">
          <Captcha />
          <div className="ml-[39px]">
            <button className="flex h-[32px] w-[256px] items-center justify-between bg-[#0078be] pr-[15px] pl-[15px] text-[14.500px] leading-5 font-semibold tracking-[0.420px] text-white">
              Regístrate
              <svg width="8" height="10" viewBox="0 0 8 10">
                <path d="M2 1L6 5L2 9" fill="none" stroke="#fff" strokeWidth="1.600" />
              </svg>
            </button>
            <p className="-mt-px text-[10px] leading-5 font-light tracking-[0.120px] text-[#b5b5b5]">*Todos los campos son necesarios</p>
          </div>
        </div>
      </div>
    </section>
  );
}

export default function App() {
  return (
    <div className="relative h-[1080px] w-[1920px] overflow-hidden bg-[#fefefe] font-['Inter',sans-serif]">
      <CityMap />
      <div className="relative">
        <Header />
        <LocationBar />
        <NavBar />
        <ActivityList />
        <Footer />
      </div>
      <RegisterDialog />
    </div>
  );
}
